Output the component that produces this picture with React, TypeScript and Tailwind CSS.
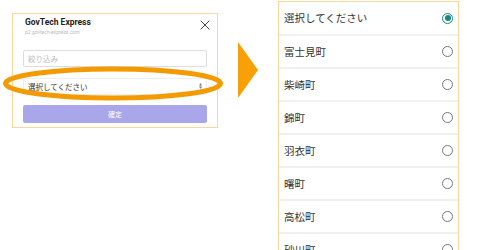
import { X } from 'lucide-react';

const towns = ['富士見町', '柴崎町', '錦町', '羽衣町', '曙町', '高松町', '砂川町'];

const jp = { fontFamily: '"Noto Sans CJK JP", "Noto Sans", sans-serif' };

function Radio({ checked }: { checked?: boolean }) {
  return checked ? (
    <span className="flex h-[11px] w-[11px] items-center justify-center rounded-full border-[1.5px] border-[#168a78]">
      <span className="h-[6px] w-[6px] rounded-full bg-[#168a78]" />
    </span>
  ) : (
    <span className="h-[11px] w-[11px] rounded-full border border-[#777]" />
  );
}

export default function App() {
  return (
    <div className="relative flex h-[250px] w-[500px] overflow-hidden bg-white" style={jp}>
      {/* left: modal */}
      <div className="relative ml-[12px] mt-[13px] h-[115px] w-[206px] border border-[#fbd79c] px-[10px] pt-[2px]">
        <div className="flex items-start justify-between pl-[2px]">
          <div>
            <p className="text-[8.5px] font-bold leading-[12px] text-[#222]" style={{ fontFamily: 'Roboto, "Liberation Sans", sans-serif' }}>
              GovTech Express
            </p>
            <p className="text-[5px] leading-[8px] text-[#bbb]" style={{ fontFamily: 'Roboto, "Liberation Sans", sans-serif' }}>
              p2.govtech-express.com
            </p>
          </div>
          <X className="mr-[-6px] mt-[1px] h-[16px] w-[16px] text-[#333]" strokeWidth={1.4} />
        </div>

        <div className="mt-[14px] flex h-[17px] items-center rounded-[2px] border border-[#ddd] px-[4px] text-[7.5px] text-[#bbb]">
          絞り込み
        </div>
        <div className="mt-[11px] flex h-[17px] items-center justify-between rounded-[2px] border border-[#eee] px-[4px] text-[7.5px] text-[#333]">
          <span>選択してください</span>
          <span className="flex flex-col items-center leading-none text-[#777]">
            <span className="text-[3px]">▲</span>
            <span className="text-[3px]">▼</span>
          </span>
        </div>
        <div className="mt-[10px] flex h-[18px] items-center justify-center rounded-[2px] bg-[#aaa6ea] text-[7px] text-white">
          確定
        </div>
      </div>

      {/* highlight ellipse */}
      <svg className="absolute left-0 top-[64px]" width="228" height="40" viewBox="0 0 228 40">
        <ellipse cx="113" cy="19.5" rx="107.5" ry="14.5" fill="none" stroke="#f39a00" strokeWidth="5" />
      </svg>

      {/* arrow */}
      <svg className="ml-[20px] mt-[42px]" width="20" height="56" viewBox="0 0 20 56">
        <polygon points="0,0 20,28 0,56" fill="#f7a008" />
      </svg>

      {/* right: picker */}
      <div className="ml-[20px] mt-[1px] h-[260px] w-[181px] border-x border-t border-[#fbd79c]">
        <div className="flex h-[32px] items-center justify-between pl-[5px] pr-[5px] text-[10.5px] text-[#333]">
          <span>選択してください</span>
          <Radio checked />
        </div>
        {towns.map((t) => (
          <div key={t} className="flex h-[33px] items-center justify-between border-t-2 border-[#f0f0f0] pl-[5px] pr-[5px] text-[10.5px] text-[#333]">
            <span>{t}</span>
            <Radio />
          </div>
        ))}
      </div>
    </div>
  );
}
